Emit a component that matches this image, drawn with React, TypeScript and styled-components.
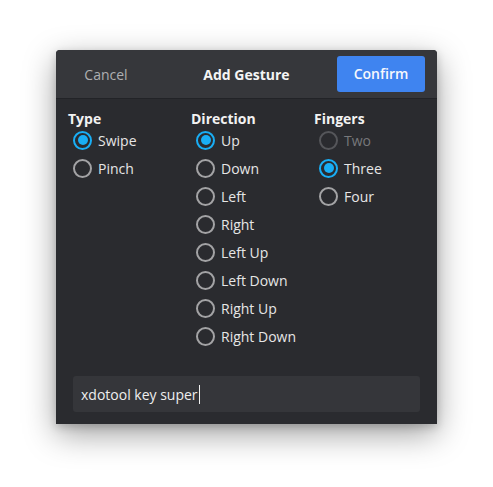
import React from "react";
import styled, { createGlobalStyle } from "styled-components";

const Global = createGlobalStyle`
  html, body { margin: 0; padding: 0; background: #ffffff; }
  body { font-family: "Open Sans", "Noto Sans", sans-serif; }
  * { box-sizing: border-box; }
`;

const Page = styled.div`
  min-height: 487px;
  padding: 50px 0 63px 56px;
`;

const Window = styled.div`
  width: 381px;
  height: 374px;
  background: #2a2b2f;
  border-radius: 4px 4px 0 0;
  box-shadow: 0 10px 32px rgba(0, 0, 0, 0.38), 0 3px 8px rgba(0, 0, 0, 0.18);
  display: flex;
  flex-direction: column;
  overflow: hidden;
`;

const Header = styled.div`
  height: 49px;
  background: #36373b;
  border-bottom: 1px solid #222327;
  display: grid;
  grid-template-columns: 1fr auto 1fr;
  align-items: center;
  padding: 0 12px;
`;

const CancelButton = styled.div`
  justify-self: start;
  width: 76px;
  text-align: center;
  color: #aeafb1;
  font-size: 14px;
  font-weight: 500;
`;

const Title = styled.div`
  color: #f4f4f4;
  font-size: 14px;
  font-weight: 700;
`;

const ConfirmButton = styled.div`
  justify-self: end;
  width: 88px;
  height: 36px;
  margin-top: -1px;
  border-radius: 3px;
  background: #3f84f0;
  color: #f6f8fc;
  font-size: 14px;
  font-weight: 600;
  display: flex;
  align-items: center;
  justify-content: center;
`;

const Body = styled.div`
  flex: 1;
  display: flex;
  flex-direction: column;
  padding: 12px 17px 12px 12px;
`;

const Columns = styled.div`
  display: grid;
  grid-template-columns: 123px 123px 1fr;
`;

const Column = styled.div`
  display: flex;
  flex-direction: column;
`;

const Heading = styled.div`
  color: #f2f2f2;
  font-size: 14px;
  font-weight: 700;
  line-height: 15px;
  height: 15px;
`;

const Row = styled.div<{ $disabled?: boolean }>`
  height: 28px;
  display: flex;
  align-items: center;
  gap: 6px;
  padding-left: 5px;
  color: ${(p) => (p.$disabled ? "#77787b" : "#e6e6e6")};
  font-size: 14px;
  font-weight: 500;
`;

const Circle = styled.span<{ $checked?: boolean; $disabled?: boolean }>`
  width: 19px;
  height: 19px;
  border-radius: 50%;
  border: 2px solid
    ${(p) => (p.$checked ? "#19aef5" : p.$disabled ? "#55565a" : "#a3a3a5")};
  display: flex;
  align-items: center;
  justify-content: center;
  flex-shrink: 0;
  &::after {
    content: "";
    width: 10px;
    height: 10px;
    border-radius: 50%;
    background: ${(p) => (p.$checked ? "#19aef5" : "transparent")};
  }
`;

const Input = styled.div`
  margin-top: auto;
  margin-left: 5px;
  height: 36px;
  border-radius: 3px;
  background: #35363a;
  display: flex;
  align-items: center;
  padding-left: 8px;
  color: #eeeeee;
  font-size: 14px;
  font-weight: 500;
`;

const Caret = styled.span`
  display: inline-block;
  width: 1px;
  height: 19px;
  background: #f0f0f0;
  margin-left: 1px;
`;

type Opt = { label: string; checked?: boolean; disabled?: boolean };

const Group = ({ title, options }: { title: string; options: Opt[] }) => (
  <Column>
    <Heading>{title}</Heading>
    {options.map((o) => (
      <Row key={o.label} $disabled={o.disabled}>
        <Circle $checked={o.checked} $disabled={o.disabled} />
        {o.label}
      </Row>
    ))}
  </Column>
);

export default function App() {
  return (
    <>
      <Global />
      <Page>
        <Window>
          <Header>
            <CancelButton>Cancel</CancelButton>
            <Title>Add Gesture</Title>
            <ConfirmButton>Confirm</ConfirmButton>
          </Header>
          <Body>
            <Columns>
              <Group
                title="Type"
                options={[{ label: "Swipe", checked: true }, { label: "Pinch" }]}
              />
              <Group
                title="Direction"
                options={[
                  { label: "Up", checked: true },
                  { label: "Down" },
                  { label: "Left" },
                  { label: "Right" },
                  { label: "Left Up" },
                  { label: "Left Down" },
                  { label: "Right Up" },
                  { label: "Right Down" },
                ]}
              />
              <Group
                title="Fingers"
                options={[
                  { label: "Two", disabled: true },
                  { label: "Three", checked: true },
                  { label: "Four" },
                ]}
              />
            </Columns>
            <Input>
              xdotool key super
              <Caret />
            </Input>
          </Body>
        </Window>
      </Page>
    </>
  );
}
